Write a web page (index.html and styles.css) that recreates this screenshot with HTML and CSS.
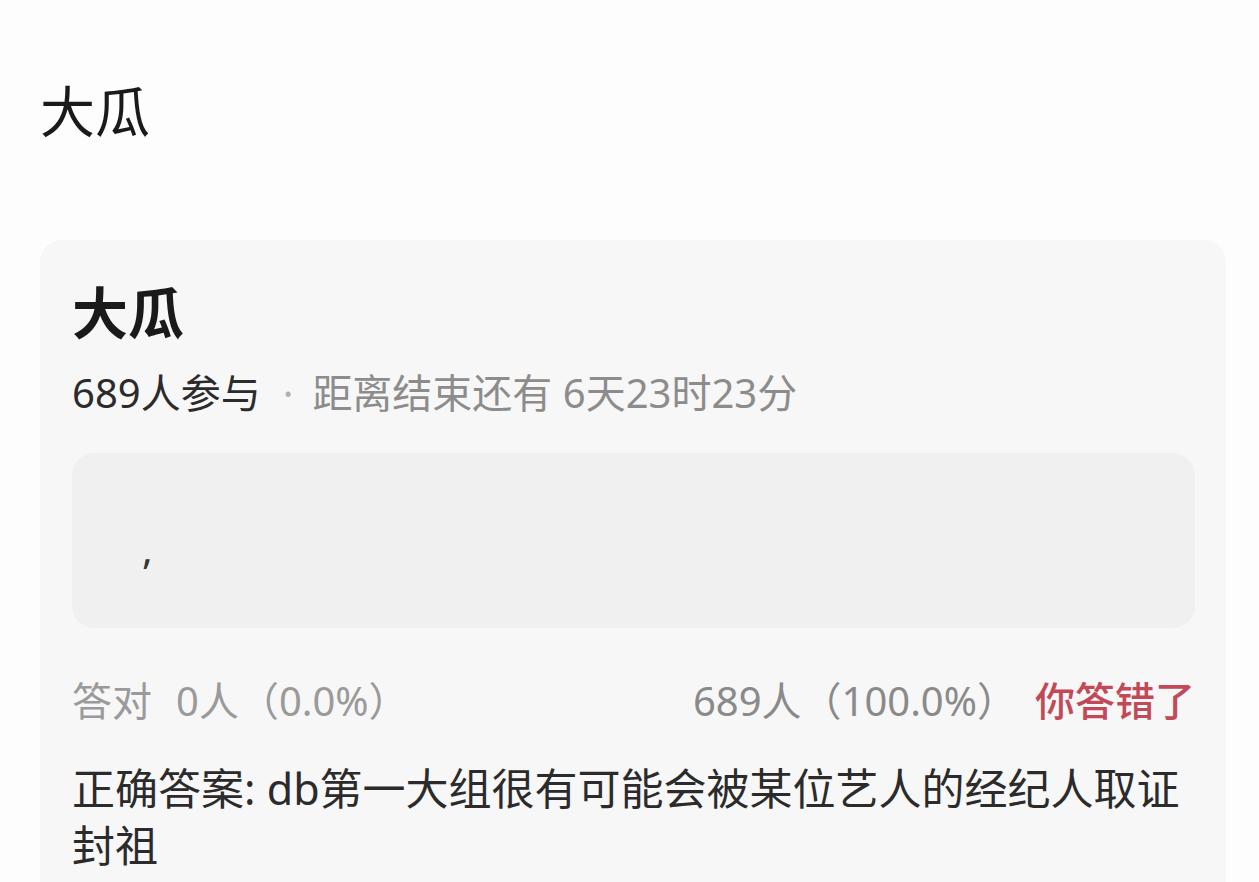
FILE: index.html
```html
<!DOCTYPE html>
<html>
	<head>
		<title>大瓜</title>
		<meta charset="UTF-8">
		<link rel="stylesheet" href="styles.css">
	</head>
	<body>
		<div class='pageTitle'>大瓜</div>

		<div class='card'>
			<div class='cardTitle'>大瓜</div>
			<div class='meta'><span class='count'>689人参与</span><span class='dot'>·</span><span class='left'>距离结束还有 6天23时23分</span></div>

			<div class='content'>
				<span>,</span>
			</div>

			<div class='stats'>
				<span class='right'><span class='label'>答对</span>0人（0.0%）</span>
				<span class='wrong'>689人（100.0%）<span class='result'>你答错了</span></span>
			</div>

			<div class='answer'>正确答案: db第一大组很有可能会被某位艺人的经纪人取证封祖</div>
		</div>
	</body>
</html>
```

FILE: styles.css
```css
*{
	box-sizing:border-box;
}
body{
	margin:0;
	padding:0 33px 0 40px;
	background-color:#fdfdfd;
	font-family:"Noto Sans","Noto Sans CJK SC",sans-serif;
	color:#222;
}
.pageTitle{
	font-size:55px;
	line-height:64px;
	padding-top:79px;
	height:240px;
	color:#1a1a1a;
}
.card{
	background-color:#f7f7f7;
	border-radius:22px;
	padding:40px 31px 30px 32px;
}
.cardTitle{
	font-size:56px;
	font-weight:bold;
	line-height:64px;
	color:#1a1a1a;
}
.meta{
	margin-top:24px;
	font-size:40px;
	line-height:50px;
	color:#8c8c8c;
}
.meta .count{
	color:#2b2b2b;
}
.meta .dot{
	margin:0 19px 0 22px;
	color:#b0b0b0;
}
.content{
	margin-top:35px;
	height:175px;
	background-color:#f0f0f0;
	border-radius:22px;
	padding:68px 0 0 70px;
	font-size:40px;
	line-height:56px;
	color:#333;
}
.stats{
	margin-top:47px;
	display:flex;
	justify-content:space-between;
	font-size:40px;
	line-height:52px;
	color:#9a9a9a;
}
.stats .label{
	margin-right:24px;
}
.stats .wrong{
	color:#8a8a8a;
}
.stats .result{
	margin-left:18px;
	font-weight:500;
	color:#c24a58;
}
.answer{
	margin-top:33px;
	font-size:43px;
	line-height:57px;
	color:#2b2b2b;
}
```
